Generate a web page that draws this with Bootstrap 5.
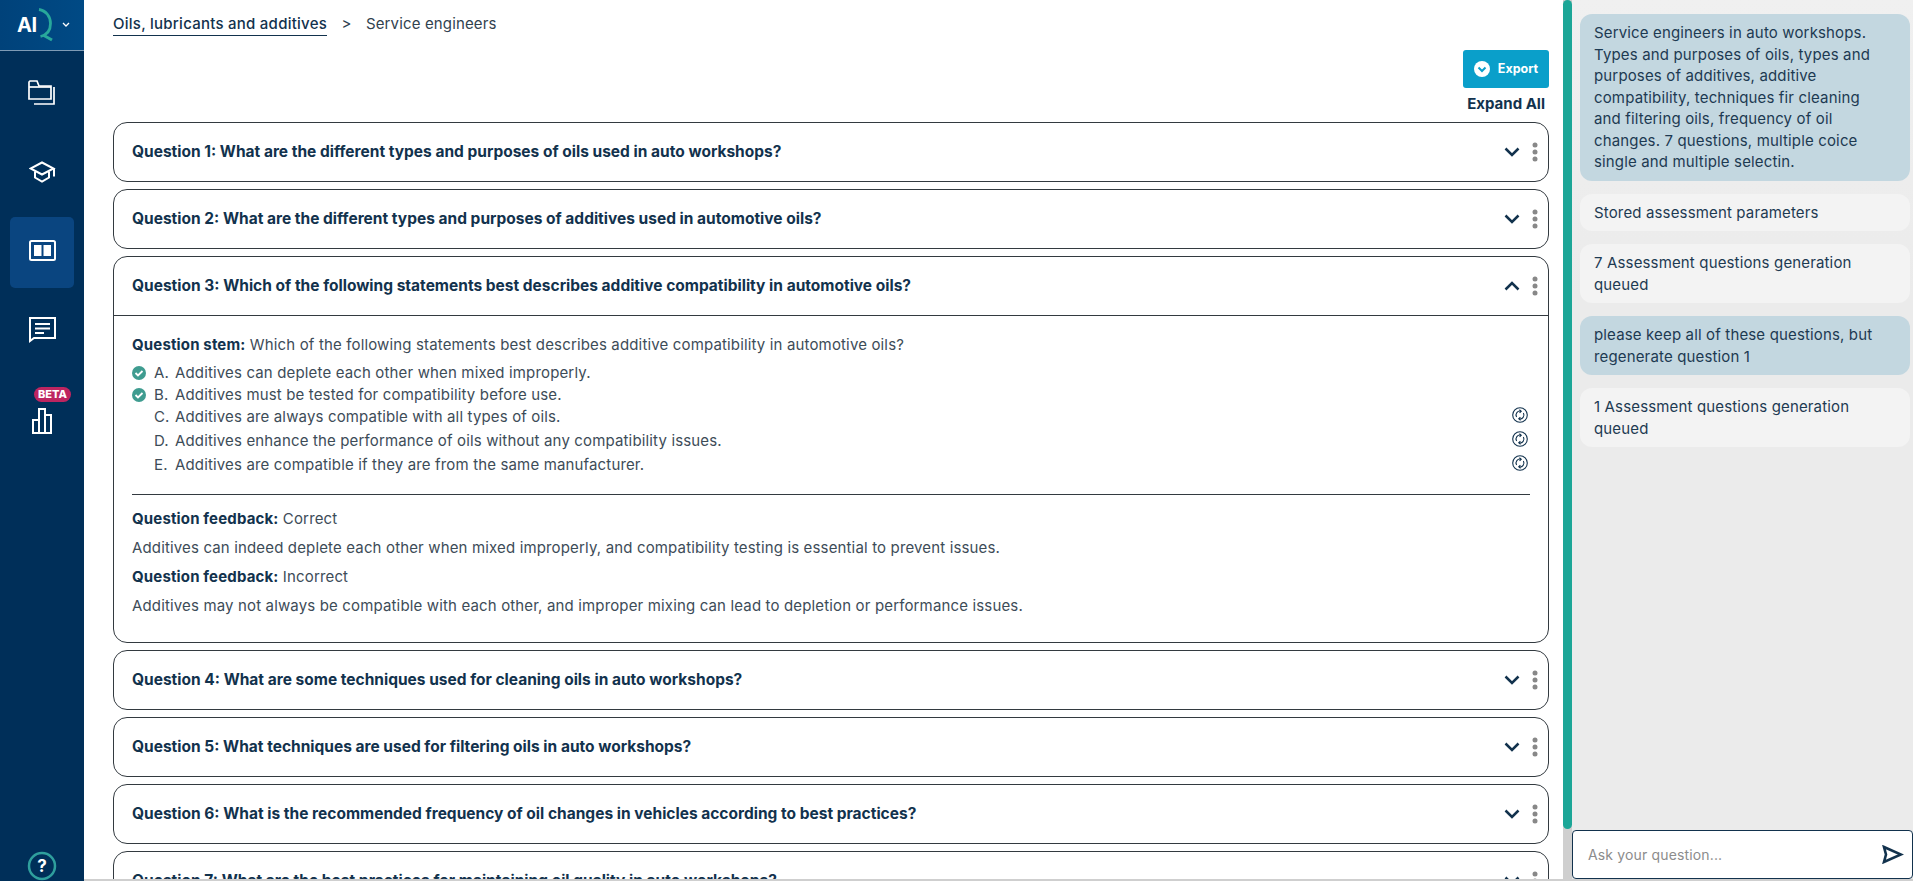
<!DOCTYPE html>
<html lang="en">
<head>
  <meta charset="UTF-8" />
  <meta name="viewport" content="width=device-width, initial-scale=1" />
  <title>Assessment questions</title>
  <link href="https://cdn.jsdelivr.net/npm/bootstrap@5.3.3/dist/css/bootstrap.min.css" rel="stylesheet" />
  <style>
    html, body { height: 100%; overflow: hidden; }
    body { font-family: Inter, "Open Sans", sans-serif; font-size: 15px; letter-spacing: .15px; color: #31424f; background: #fff; }
    .app-shell { height: 881px; }

    .side-rail { width: 84px; background: #002f59; flex: none; letter-spacing: 0; }
    .rail-head { height: 51px; background: linear-gradient(90deg, #00427a, #004a85); border-bottom: 1px solid #7f9bb5; padding-left: 17px; }
    .rail-logo { color: #fff; font-weight: 700; font-size: 20px; letter-spacing: -.5px; line-height: 1; }
    .rail-items { padding-top: 8px; }
    .rail-item { width: 64px; height: 71px; margin: 0 auto 8px; border-radius: 5px; padding-bottom: 4px; }
    .rail-item.is-on { background: #0a4580; }
    .beta-tag { position: absolute; top: 12px; left: 24px; background: #bd2560; color: #fff; font-size: 11px; font-weight: 800; line-height: 15px; padding: 0 4px; border-radius: 8px; }

    .main-col { width: 1479px; flex: none; padding: 0 14px 0 29px; overflow: hidden; }
    .crumbs { height: 50px; padding-top: 14px; line-height: 19px; }
    .crumb-link { color: #12324d; font-weight: 500; letter-spacing: .25px; border-bottom: 1px solid #12324d; padding-bottom: 2px; }
    .crumb-sep { margin: 0 10px; }
    .export-btn { width: 86px; height: 38px; background: #0a9fca; border: 0; border-radius: 3px; color: #fff; font-size: 12.500px; font-weight: 700; letter-spacing: 0; padding: 0; }
    .expand-link { color: #12324d; font-size: 15px; font-weight: 700; letter-spacing: 0; line-height: 18px; margin: 7px 4px 9px 0; }

    .q-box { border: 1px solid #333a40; border-radius: 14px; margin-bottom: 7px; background: #fff; }
    .q-head { height: 58px; padding: 0 10px 0 18px; }
    .q-title { color: #12324d; font-size: 15.500px; font-weight: 700; letter-spacing: 0; }
    .q-more { margin-left: 12px; }
    .q-body { border-top: 1px solid #333a40; padding: 18px 18px 0; height: 327px; }
    .q-line { line-height: 22px; color: #3d4c58; margin-bottom: 6px; }
    .q-line b { color: #12324d; }
    .opt-row { height: 22px; line-height: 22px; color: #3d4c58; }
    .opt-row.is-spaced { margin-top: 2px; }
    .opt-mark { width: 22px; flex: none; }
    .opt-letter { width: 21px; flex: none; }
    .opt-spin { margin: -4px 2px 0 auto; }
    .q-rule { border-top: 1px solid #333a40; margin: 18px 0 13px; }
    .fb-line { line-height: 22px; margin-bottom: 7px; color: #3d4c58; }
    .fb-line b { color: #12324d; }

    .bar-track { width: 9px; flex: none; background: #cfcfcf; }
    .bar-thumb { height: 829px; background: #1ca697; border-radius: 5px; }

    .chat-col { width: 341px; flex: none; background: #ebebeb; }
    .chat-list { padding: 14px 3px 0 8px; height: 830px; background: linear-gradient(180deg, #f0f0f0, #ebebeb 300px); }
    .chat-bubble { border-radius: 12px; padding: 8px 30px 8px 14px; line-height: 21.500px; margin-bottom: 13px; color: #1d3a52; }
    .chat-bubble.from-user { background: #c3d7e0; }
    .chat-bubble.from-bot { background: #f3f3f3; }
    .chat-input { height: 49px; background: #fff; border: 1px solid #12324d; border-radius: 4px; padding: 0 8px 0 15px; }
    .chat-hint { color: #8c8c8c; font-size: 14px; }
    .bottom-strip { position: absolute; left: 84px; right: 0; bottom: 0; height: 2px; background: #cfcfcf; }
  </style>
</head>
<body>

<div class="app-shell d-flex position-relative">

  <!-- left rail -->
  <div class="side-rail d-flex flex-column">
    <div class="rail-head d-flex align-items-center">
      <span class="rail-logo">AI</span>
      <svg width="17" height="34" viewBox="0 0 17 34" fill="none"><path d="M2 1.500c7 1 11.500 7 11.500 14 0 7-4 11.500-10 13" stroke="#28a89b" stroke-width="2.800"/><path d="M6 27l9 5" stroke="#28a89b" stroke-width="3"/></svg>
      <svg class="ms-2" width="8" height="6" viewBox="0 0 8 6" fill="none"><path d="M1 1l3 3 3-3" stroke="#fff" stroke-width="1.300"/></svg>
    </div>
    <div class="rail-items flex-grow-1">
      <div class="rail-item d-flex align-items-center justify-content-center">
        <svg width="28" height="25" viewBox="0 0 28 25" fill="none" stroke="#fff" stroke-width="1.700"><path d="M1 2v17h22V6H11L9 1H2z"/><path d="M1 7h22"/><path d="M26 7v17H6"/></svg>
      </div>
      <div class="rail-item d-flex align-items-center justify-content-center">
        <svg width="27" height="22" viewBox="0 0 27 22" fill="none" stroke="#fff" stroke-width="2"><path d="M13 1.500L1.500 7.500 13 13.500l11.500-6z"/><path d="M6 10.500v6l7 4 7-4v-6"/><path d="M25 7.500v8"/></svg>
      </div>
      <div class="rail-item is-on d-flex align-items-center justify-content-center">
        <svg width="27" height="21" viewBox="0 0 27 21" fill="none"><rect x="1" y="1" width="25" height="19" rx="1.500" stroke="#fff" stroke-width="2"/><rect x="5" y="5" width="7.500" height="11" fill="#fff"/><rect x="14.500" y="5" width="7.500" height="11" fill="#fff"/></svg>
      </div>
      <div class="rail-item d-flex align-items-center justify-content-center">
        <svg width="27" height="27" viewBox="0 0 27 27" fill="none" stroke="#fff" stroke-width="2"><path d="M1 25V2h25v20H5z"/><path d="M6 8h15M6 12.500h15M6 17h9"/></svg>
      </div>
      <div class="rail-item position-relative d-flex align-items-center justify-content-center pt-4">
        <span class="beta-tag">BETA</span>
        <svg width="20" height="27" viewBox="0 0 20 27" fill="none" stroke="#fff" stroke-width="2"><path d="M1 26V13h6v13M7 26V2h6v24M13 26V8h6v18zM0 26h20"/></svg>
      </div>
    </div>
    <div class="text-center lh-1">
      <svg class="d-block mx-auto" width="30" height="30" viewBox="0 0 30 30"><circle cx="15" cy="15" r="13" fill="none" stroke="#2f9f9d" stroke-width="2.500"/><text x="15" y="21" text-anchor="middle" fill="#fff" font-size="17" font-weight="700" font-family="Inter, sans-serif">?</text></svg>
    </div>
  </div>

  <!-- questions -->
  <div class="main-col">
    <div class="crumbs">
      <span class="crumb-link">Oils, lubricants and additives</span>
      <span class="crumb-sep">&gt;</span>
      <span>Service engineers</span>
    </div>
    <div class="d-flex flex-column align-items-end">
      <button class="export-btn d-flex align-items-center justify-content-center gap-2" type="button">
        <svg width="16" height="16" viewBox="0 0 16 16"><circle cx="8" cy="8" r="8" fill="#fff"/><path d="M4.500 6.500L8 10l3.500-3.500" fill="none" stroke="#0a9fca" stroke-width="2"/></svg>
        Export
      </button>
      <div class="expand-link">Expand All</div>
    </div>

    <div class="q-box">
      <div class="q-head d-flex align-items-center">
        <span class="q-title">Question 1: What are the different types and purposes of oils used in auto workshops?</span>
        <svg class="ms-auto" width="16" height="10" viewBox="0 0 16 10" fill="none"><path d="M1.500 1.500L8 8l6.500-6.500" stroke="#12324d" stroke-width="2.500"/></svg>
        <svg class="q-more" width="6" height="20" viewBox="0 0 6 20" fill="#888"><circle cx="3" cy="3" r="2.500"/><circle cx="3" cy="10" r="2.500"/><circle cx="3" cy="17" r="2.500"/></svg>
      </div>
    </div>
    <div class="q-box">
      <div class="q-head d-flex align-items-center">
        <span class="q-title">Question 2: What are the different types and purposes of additives used in automotive oils?</span>
        <svg class="ms-auto" width="16" height="10" viewBox="0 0 16 10" fill="none"><path d="M1.500 1.500L8 8l6.500-6.500" stroke="#12324d" stroke-width="2.500"/></svg>
        <svg class="q-more" width="6" height="20" viewBox="0 0 6 20" fill="#888"><circle cx="3" cy="3" r="2.500"/><circle cx="3" cy="10" r="2.500"/><circle cx="3" cy="17" r="2.500"/></svg>
      </div>
    </div>
    <div class="q-box">
      <div class="q-head d-flex align-items-center">
        <span class="q-title">Question 3: Which of the following statements best describes additive compatibility in automotive oils?</span>
        <svg class="ms-auto" width="16" height="10" viewBox="0 0 16 10" fill="none"><path d="M1.500 8.500L8 2l6.500 6.500" stroke="#12324d" stroke-width="2.500"/></svg>
        <svg class="q-more" width="6" height="20" viewBox="0 0 6 20" fill="#888"><circle cx="3" cy="3" r="2.500"/><circle cx="3" cy="10" r="2.500"/><circle cx="3" cy="17" r="2.500"/></svg>
      </div>
      <div class="q-body">
        <div class="q-line"><b>Question stem:</b> Which of the following statements best describes additive compatibility in automotive oils?</div>
        <div class="opt-row d-flex align-items-center">
          <span class="opt-mark"><svg class="d-block" width="14" height="14" viewBox="0 0 14 14"><circle cx="7" cy="7" r="7" fill="#3f9c90"/><path d="M3.500 7l2.500 2.500 4.500-4.500" fill="none" stroke="#fff" stroke-width="1.800"/></svg></span>
          <span class="opt-letter">A.</span><span>Additives can deplete each other when mixed improperly.</span>
        </div>
        <div class="opt-row d-flex align-items-center">
          <span class="opt-mark"><svg class="d-block" width="14" height="14" viewBox="0 0 14 14"><circle cx="7" cy="7" r="7" fill="#3f9c90"/><path d="M3.500 7l2.500 2.500 4.500-4.500" fill="none" stroke="#fff" stroke-width="1.800"/></svg></span>
          <span class="opt-letter">B.</span><span>Additives must be tested for compatibility before use.</span>
        </div>
        <div class="opt-row d-flex align-items-center">
          <span class="opt-mark"></span>
          <span class="opt-letter">C.</span><span>Additives are always compatible with all types of oils.</span>
          <svg class="opt-spin" width="16" height="16" viewBox="0 0 16 16" fill="none" stroke="#12324d" stroke-width="1.100"><circle cx="8" cy="8" r="7.300"/><path d="M9 4.100A4 4 0 0 0 4.600 10M7 11.900A4 4 0 0 0 11.400 6"/><path d="M7.400 2.800L9.200 4.200 7.600 5.800M8.600 13.200L6.800 11.800 8.400 10.200"/></svg>
        </div>
        <div class="opt-row is-spaced d-flex align-items-center">
          <span class="opt-mark"></span>
          <span class="opt-letter">D.</span><span>Additives enhance the performance of oils without any compatibility issues.</span>
          <svg class="opt-spin" width="16" height="16" viewBox="0 0 16 16" fill="none" stroke="#12324d" stroke-width="1.100"><circle cx="8" cy="8" r="7.300"/><path d="M9 4.100A4 4 0 0 0 4.600 10M7 11.900A4 4 0 0 0 11.400 6"/><path d="M7.400 2.800L9.200 4.200 7.600 5.800M8.600 13.200L6.800 11.800 8.400 10.200"/></svg>
        </div>
        <div class="opt-row is-spaced d-flex align-items-center">
          <span class="opt-mark"></span>
          <span class="opt-letter">E.</span><span>Additives are compatible if they are from the same manufacturer.</span>
          <svg class="opt-spin" width="16" height="16" viewBox="0 0 16 16" fill="none" stroke="#12324d" stroke-width="1.100"><circle cx="8" cy="8" r="7.300"/><path d="M9 4.100A4 4 0 0 0 4.600 10M7 11.900A4 4 0 0 0 11.400 6"/><path d="M7.400 2.800L9.200 4.200 7.600 5.800M8.600 13.200L6.800 11.800 8.400 10.200"/></svg>
        </div>
        <div class="q-rule"></div>
        <div class="fb-line"><b>Question feedback:</b> Correct</div>
        <div class="fb-line">Additives can indeed deplete each other when mixed improperly, and compatibility testing is essential to prevent issues.</div>
        <div class="fb-line"><b>Question feedback:</b> Incorrect</div>
        <div class="fb-line">Additives may not always be compatible with each other, and improper mixing can lead to depletion or performance issues.</div>
      </div>
    </div>
    <div class="q-box">
      <div class="q-head d-flex align-items-center">
        <span class="q-title">Question 4: What are some techniques used for cleaning oils in auto workshops?</span>
        <svg class="ms-auto" width="16" height="10" viewBox="0 0 16 10" fill="none"><path d="M1.500 1.500L8 8l6.500-6.500" stroke="#12324d" stroke-width="2.500"/></svg>
        <svg class="q-more" width="6" height="20" viewBox="0 0 6 20" fill="#888"><circle cx="3" cy="3" r="2.500"/><circle cx="3" cy="10" r="2.500"/><circle cx="3" cy="17" r="2.500"/></svg>
      </div>
    </div>
    <div class="q-box">
      <div class="q-head d-flex align-items-center">
        <span class="q-title">Question 5: What techniques are used for filtering oils in auto workshops?</span>
        <svg class="ms-auto" width="16" height="10" viewBox="0 0 16 10" fill="none"><path d="M1.500 1.500L8 8l6.500-6.500" stroke="#12324d" stroke-width="2.500"/></svg>
        <svg class="q-more" width="6" height="20" viewBox="0 0 6 20" fill="#888"><circle cx="3" cy="3" r="2.500"/><circle cx="3" cy="10" r="2.500"/><circle cx="3" cy="17" r="2.500"/></svg>
      </div>
    </div>
    <div class="q-box">
      <div class="q-head d-flex align-items-center">
        <span class="q-title">Question 6: What is the recommended frequency of oil changes in vehicles according to best practices?</span>
        <svg class="ms-auto" width="16" height="10" viewBox="0 0 16 10" fill="none"><path d="M1.500 1.500L8 8l6.500-6.500" stroke="#12324d" stroke-width="2.500"/></svg>
        <svg class="q-more" width="6" height="20" viewBox="0 0 6 20" fill="#888"><circle cx="3" cy="3" r="2.500"/><circle cx="3" cy="10" r="2.500"/><circle cx="3" cy="17" r="2.500"/></svg>
      </div>
    </div>
    <div class="q-box">
      <div class="q-head d-flex align-items-center">
        <span class="q-title">Question 7: What are the best practices for maintaining oil quality in auto workshops?</span>
        <svg class="ms-auto" width="16" height="10" viewBox="0 0 16 10" fill="none"><path d="M1.500 1.500L8 8l6.500-6.500" stroke="#12324d" stroke-width="2.500"/></svg>
        <svg class="q-more" width="6" height="20" viewBox="0 0 6 20" fill="#888"><circle cx="3" cy="3" r="2.500"/><circle cx="3" cy="10" r="2.500"/><circle cx="3" cy="17" r="2.500"/></svg>
      </div>
    </div>
  </div>

  <!-- chat -->
  <div class="bar-track"><div class="bar-thumb"></div></div>
  <div class="chat-col">
    <div class="chat-list">
      <div class="chat-bubble from-user">Service engineers in auto workshops. Types and purposes of oils, types and purposes of additives, additive compatibility, techniques fir cleaning and filtering oils, frequency of oil changes. 7 questions, multiple coice single and multiple selectin.</div>
      <div class="chat-bubble from-bot">Stored assessment parameters</div>
      <div class="chat-bubble from-bot">7 Assessment questions generation queued</div>
      <div class="chat-bubble from-user">please keep all of these questions, but regenerate question 1</div>
      <div class="chat-bubble from-bot">1 Assessment questions generation queued</div>
    </div>
    <div class="chat-input d-flex align-items-center justify-content-between">
      <span class="chat-hint">Ask your question...</span>
      <svg width="22" height="19" viewBox="0 0 22 19" fill="none"><path d="M2 2l17 7.500L2 17l2-7.500z" stroke="#12324d" stroke-width="2.600"/></svg>
    </div>
  </div>

  <div class="bottom-strip"></div>
</div>

<script src="https://cdn.jsdelivr.net/npm/bootstrap@5.3.3/dist/js/bootstrap.bundle.min.js"></script>
</body>
</html>
